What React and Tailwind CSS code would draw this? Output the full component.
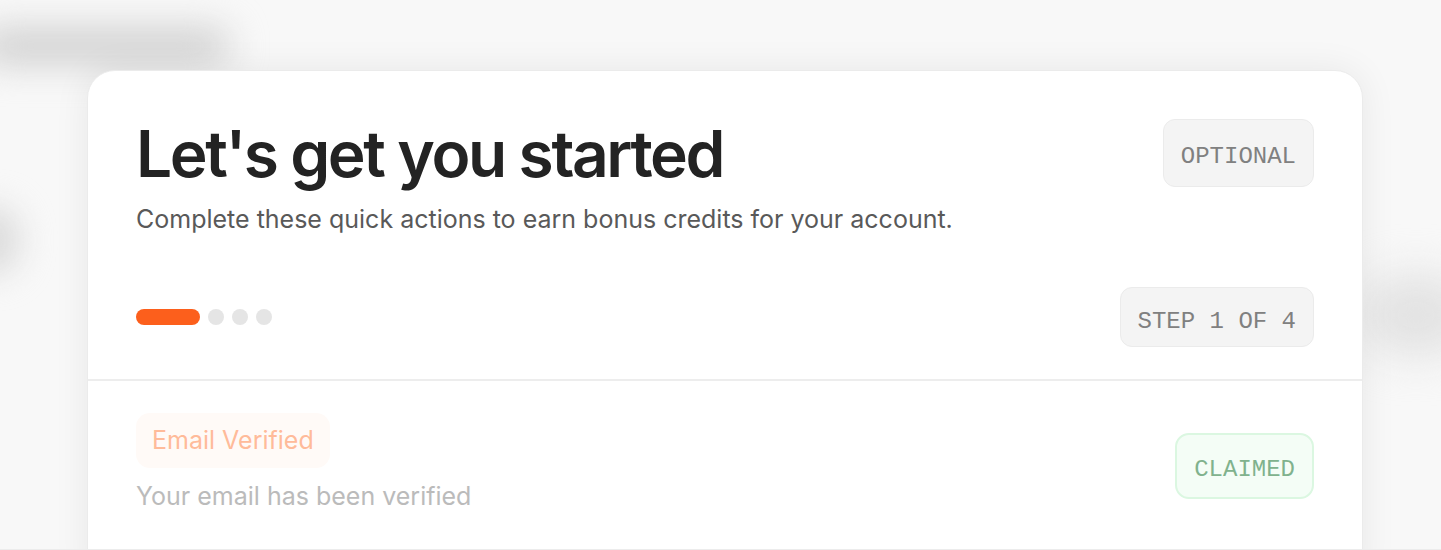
export default function App() {
  const mono = { fontFamily: '"Liberation Mono", "DejaVu Sans Mono", monospace' };
  return (
    <div className="relative h-[550px] w-full overflow-hidden bg-[#f8f8f8]" style={{ fontFamily: 'Inter, "Noto Sans", sans-serif' }}>
      <div className="pointer-events-none absolute left-[-20px] top-[28px] h-[36px] w-[250px] rounded-full bg-[#cfcfcf] blur-[18px]" />
      <div className="pointer-events-none absolute left-[-40px] top-[205px] h-[70px] w-[60px] rounded-full bg-[#dcdcdc] blur-[16px]" />
      <div className="pointer-events-none absolute right-[-30px] top-[275px] h-[80px] w-[110px] rounded-full bg-[#e2e2e2] blur-[22px]" />
      <div className="relative pt-[70px] pl-[87px]">
        <div className="w-[1276px] overflow-hidden rounded-[28px] border border-[#ebebeb] bg-white shadow-[0_0_36px_rgba(0,0,0,0.07)]">
          <div className="px-[48px] pt-[48px] pb-[32px]">
            <div className="flex items-start justify-between">
              <div>
                <h1 className="text-[64px] font-semibold leading-[70px] tracking-[-0.037em] text-[#232323]">Let's get you started</h1>
                <p className="mt-[14px] text-[25px] leading-[32px] text-[#595959]">Complete these quick actions to earn bonus credits for your account.</p>
              </div>
              <div className="rounded-[12px] border border-[#ebebeb] bg-[#f4f4f4] px-[17px] pt-[22px] pb-[14px] text-[24px] leading-[30px] text-[#808080]" style={mono}>OPTIONAL</div>
            </div>
            <div className="mt-[52px] flex items-center justify-between">
              <div className="flex items-center gap-[8px]">
                <div className="h-[16px] w-[64px] rounded-full bg-[#fc5f1c]" />
                <div className="h-[16px] w-[16px] rounded-full bg-[#e5e5e5]" />
                <div className="h-[16px] w-[16px] rounded-full bg-[#e5e5e5]" />
                <div className="h-[16px] w-[16px] rounded-full bg-[#e5e5e5]" />
              </div>
              <div className="rounded-[12px] border border-[#ebebeb] bg-[#f4f4f4] px-[17px] pt-[19px] pb-[9px] text-[24px] leading-[30px] text-[#808080]" style={mono}>STEP 1 OF 4</div>
            </div>
          </div>
          <div className="border-t-2 border-[#ededed] px-[48px] pt-[32px] pb-[80px]">
            <div className="flex items-center justify-between">
              <div>
                <div className="inline-block rounded-[14px] bg-[#fffaf7] px-[16px] py-[12px] text-[25px] leading-[31px] text-[#ffbb9a]">Email Verified</div>
                <p className="mt-[12px] text-[25px] leading-[32px] text-[#bbbbbb]">Your email has been verified</p>
              </div>
              <div className="mt-[6px] rounded-[14px] border-2 border-[#dbf7e1] bg-[#f4fdf6] px-[17px] pt-[20px] pb-[12px] text-[24px] leading-[30px] text-[#80b28d]" style={mono}>CLAIMED</div>
            </div>
          </div>
        </div>
      </div>
      <div className="absolute bottom-0 left-0 h-px w-full bg-[#ececec]" />
    </div>
  );
}
